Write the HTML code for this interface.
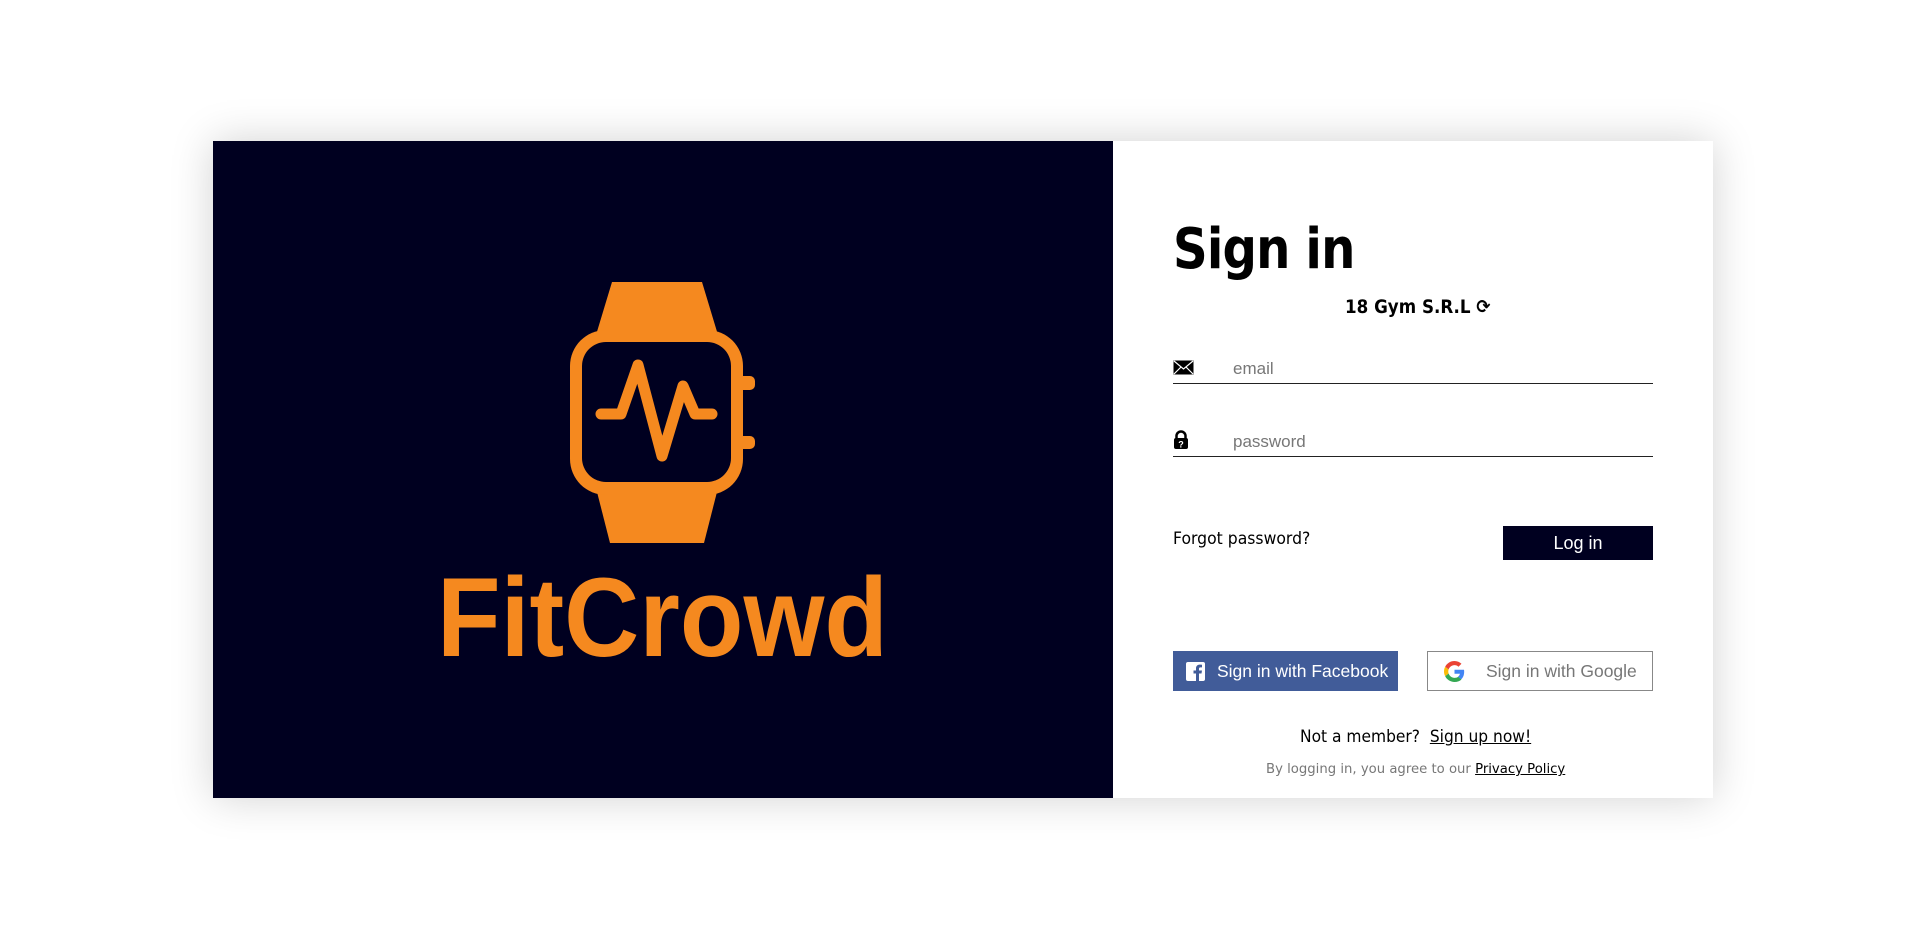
<!DOCTYPE html>
<html><head><meta charset="utf-8"><style>
*{margin:0;padding:0;box-sizing:border-box}
body{width:1925px;height:939px;background:#fff;position:relative;overflow:hidden;font-family:"Liberation Sans",sans-serif}
.card{position:absolute;left:213px;top:141px;width:1500px;height:657px;background:#fff;box-shadow:0 0 40px rgba(0,0,0,.18)}
.left{position:absolute;left:213px;top:141px}
.a{position:absolute;white-space:nowrap;transform-origin:left top}
.line{position:absolute;left:1173px;width:480px;height:1px;background:#222}
</style></head><body>
<div class="card"></div>
<svg class="left" width="900" height="657" viewBox="213 141 900 657">
<rect x="213" y="141" width="900" height="657" fill="#000020"/>
<g fill="#F5891F">
<path d="M612 282 H702 L718 335 H596 Z"/>
<path d="M596 488 H718 L704 543 H610 Z"/>
<rect x="570" y="330" width="173" height="165" rx="36"/>
<rect x="738" y="376" width="17" height="14" rx="5"/>
<rect x="738" y="436" width="17" height="13" rx="5"/>
</g>
<rect x="582" y="342" width="149" height="140" rx="24" fill="#000020"/>
<polyline points="601,414 621,414 638,365 662,456 683,386 695,414 712,414" fill="none" stroke="#F5891F" stroke-width="11" stroke-linecap="round" stroke-linejoin="round"/>
<text x="437" y="656" font-family="Liberation Sans" font-weight="bold" font-size="112" fill="#F5891F" textLength="451" lengthAdjust="spacingAndGlyphs">FitCrowd</text>
</svg>
<div class="a" style="left:1173px;top:218px;font-size:56px;font-weight:bold;line-height:64px;font-family:'DejaVu Sans',sans-serif;letter-spacing:-1px;transform:scaleX(0.86)">Sign in</div>
<div class="a" style="left:1345px;top:296px;font-size:19px;font-weight:bold;font-family:'DejaVu Sans',sans-serif;transform:scaleX(0.88)">18 Gym S.R.L ⟳</div>
<svg class="a" style="left:1173px;top:360px" width="21" height="15" viewBox="0 0 21 15"><rect x=".5" y=".5" width="20" height="14" fill="#000"/><path d="M1 1 L10.5 9 L20 1 M1 14 L8 7 M20 14 L13 7" stroke="#fff" stroke-width="1.2" fill="none"/></svg>
<div class="a" style="left:1233px;top:359px;font-size:17px;color:#777">email</div>
<div class="line" style="top:383px"></div>
<svg class="a" style="left:1173px;top:430px" width="16" height="20" viewBox="0 0 16 20"><path d="M3.5 9 V6 a4.5 4.5 0 0 1 9 0 V9" stroke="#000" stroke-width="2.5" fill="none"/><rect x="1" y="8" width="14" height="11" rx="2"/><text x="8" y="17.5" font-size="9" fill="#fff" text-anchor="middle" font-weight="bold">?</text></svg>
<div class="a" style="left:1233px;top:432px;font-size:17px;color:#777">password</div>
<div class="line" style="top:456px"></div>
<div class="a" style="left:1173px;top:529px;font-size:17px;font-family:'DejaVu Sans',sans-serif;color:#000;transform:scaleX(0.92)">Forgot password?</div>
<div class="a" style="left:1503px;top:526px;width:150px;height:34px;background:#000020;color:#fff;font-size:18px;text-align:center;line-height:34px">Log in</div>
<div class="a" style="left:1173px;top:651px;width:225px;height:40px;background:#415C99;color:#fff;font-size:17.5px;line-height:40px;padding-left:44px">Sign in with Facebook</div>
<svg class="a" style="left:1186px;top:662px" width="19" height="19" viewBox="0 0 19 19"><rect width="19" height="19" rx="2" fill="#fff"/><path d="M13 19 V11.5 H15.5 L16 8.5 H13 V6.8 C13 6 13.3 5.4 14.5 5.4 H16 V2.8 C15.5 2.7 14.6 2.6 13.8 2.6 C11.6 2.6 10 3.9 10 6.4 V8.5 H7.5 V11.5 H10 V19 Z" fill="#415C99"/></svg>
<div class="a" style="left:1427px;top:651px;width:226px;height:40px;border:1px solid #888;color:#777;font-size:17.5px;line-height:38px;padding-left:58px">Sign in with Google</div>
<svg class="a" style="left:1444px;top:661px" width="21" height="21" viewBox="0 0 48 48"><path fill="#EA4335" d="M24 9.5c3.5 0 6.6 1.2 9.1 3.6l6.8-6.8C35.8 2.4 30.3 0 24 0 14.6 0 6.6 5.4 2.7 13.2l7.9 6.2C12.5 13.6 17.8 9.5 24 9.5z"/><path fill="#4285F4" d="M46.1 24.5c0-1.6-.1-3.1-.4-4.5H24v9h12.4c-.5 2.9-2.2 5.4-4.7 7l7.6 5.9c4.4-4.1 6.8-10.1 6.8-17.4z"/><path fill="#FBBC05" d="M10.5 28.6c-.5-1.4-.8-3-.8-4.6s.3-3.2.8-4.6l-7.9-6.2C1 16.5 0 20.1 0 24s1 7.5 2.7 10.8l7.8-6.2z"/><path fill="#34A853" d="M24 48c6.5 0 11.9-2.1 15.9-5.8l-7.6-5.9c-2.1 1.4-4.9 2.3-8.3 2.3-6.2 0-11.5-4.2-13.4-9.9l-7.9 6.2C6.6 42.6 14.6 48 24 48z"/></svg>
<div class="a" style="left:1300px;top:727px;font-size:17px;font-family:'DejaVu Sans',sans-serif;transform:scaleX(0.91)">Not a member?&nbsp; <u>Sign up now!</u></div>
<div class="a" style="left:1266px;top:761px;font-size:13.5px;color:#777;font-family:'DejaVu Sans',sans-serif;transform:scaleX(0.98)">By logging in, you agree to our <u style="color:#000">Privacy Policy</u></div>
</body></html>
